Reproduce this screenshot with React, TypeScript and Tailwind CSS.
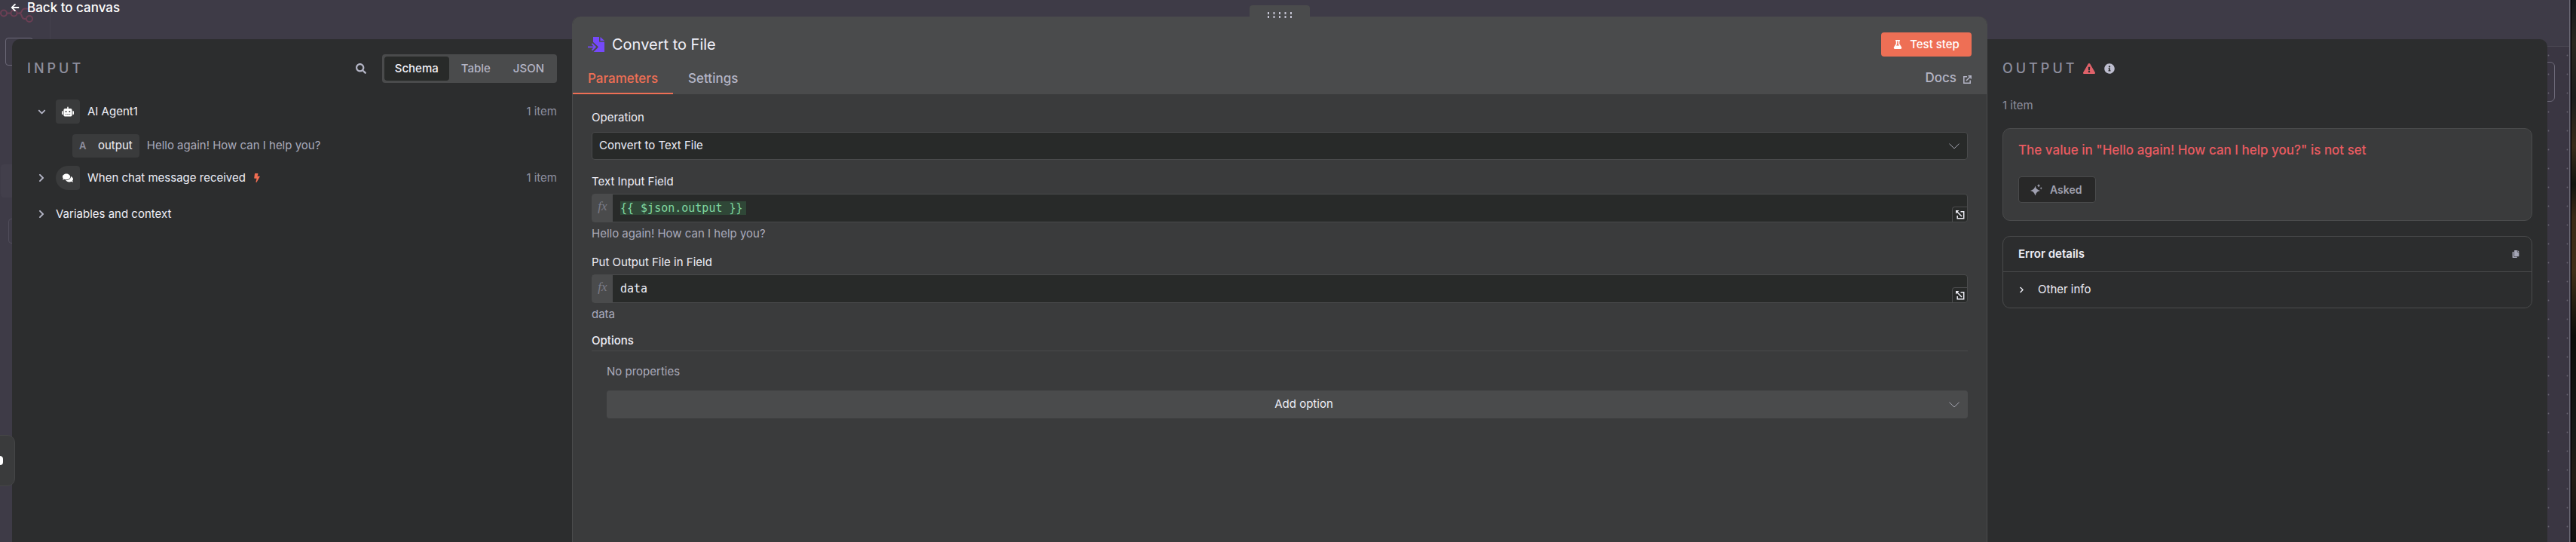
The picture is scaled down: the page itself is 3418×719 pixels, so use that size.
import type { ReactNode } from "react";
import {
  FaArrowLeft,
  FaBolt,
  FaChevronDown,
  FaChevronRight,
  FaComments,
  FaCopy,
  FaExclamationTriangle,
  FaFlask,
  FaInfoCircle,
  FaRobot,
  FaSearch,
} from "react-icons/fa";

function FileImportIcon() {
  return (
    <svg viewBox="0 0 22 20" className="h-5 w-[22px]" fill="#7549fb" aria-hidden="true">
      <path d="M7 0h8v6.500h7V20H7.500l6-6v-1.200L7 6.800z" />
      <path d="M16.500 0l5.500 5h-5.500z" />
      <path d="M0 12.400h7.600L4.800 9.600 6.200 8.300l5 5-5 5-1.400-1.300 2.800-2.800H0z" />
    </svg>
  );
}

function ExternalLinkIcon() {
  return (
    <svg viewBox="0 0 11 11" className="size-[11px]" fill="none" stroke="currentColor" strokeWidth="1.500" aria-hidden="true">
      <path d="M5 1.800H.8v8.400h8.400V6.500" />
      <path d="M4 7l6-6M6.500.8h3.700v3.700" />
    </svg>
  );
}

function ExpandIcon() {
  return (
    <svg viewBox="0 0 12 12" className="size-3" fill="none" stroke="currentColor" strokeWidth="1.500" aria-hidden="true">
      <path d="M6.500 1.800h4.200v9H2.200V7" />
      <path d="M1.500 1.500L8 8" />
      <path d="M0 0h4.500L0 4.500z" fill="currentColor" stroke="none" />
    </svg>
  );
}

function SparkleIcon() {
  return (
    <svg viewBox="0 0 16 16" className="size-4" fill="currentColor" aria-hidden="true">
      <path d="M6.500 2.500q1 5 6.500 6.500-5.500 1-6.500 6.500Q5.500 10 0 9q5.500-1.500 6.500-6.500z" />
      <path d="M11 0q.4 2 2 2.400-1.600.4-2 2.200-.4-1.800-2-2.200Q10.600 2 11 0zM14.200 4q.3 1.500 1.600 1.800-1.300.3-1.600 1.700-.3-1.400-1.600-1.700 1.300-.3 1.600-1.800z" />
    </svg>
  );
}

function ThinChevron() {
  return (
    <svg
      viewBox="0 0 14 8"
      className="pointer-events-none absolute right-[11px] top-1/2 h-2 w-[14px] -translate-y-1/2"
      fill="none"
      stroke="#a5a6b2"
      aria-hidden="true"
    >
      <path d="M.5.7L7 7l6.500-6.300" />
    </svg>
  );
}

function CanvasBackdrop() {
  return (
    <div className="absolute inset-0 overflow-hidden" aria-hidden="true">
      <div className="absolute inset-y-0 right-[8px] w-[46px] border-r border-[#6b6975]" />
      <div className="absolute bottom-0 right-[9px] top-[61px] w-[35px] border-t border-[#4a4752] bg-[#3a3642]">
        <svg className="h-full w-full">
          <defs>
            <pattern id="dots" x="6" y="-1" width="25" height="25" patternUnits="userSpaceOnUse">
              <circle cx="1.500" cy="12.500" r="0.900" fill="#65616e" />
            </pattern>
          </defs>
          <rect width="100%" height="100%" fill="url(#dots)" />
        </svg>
      </div>
      <div className="absolute right-[28px] top-[82px] h-[53px] w-12 rounded-md border border-[#6b6877]" />
      <div className="absolute inset-y-0 right-0 w-[7px] border-l border-black bg-[linear-gradient(180deg,#15181b_0%,#2c2820_8%,#1c1d1d_18%,#3a2d1c_27%,#12140f_34%,#3b2a18_40%,#41301a_50%,#0c0d0a_62%,#171a18_80%,#241d16_88%,#10110f_100%)]" />
      <div className="absolute left-[66px] top-0 h-[60px] w-px bg-[#45424e]" />
      <svg className="absolute left-0 top-2 h-6 w-[50px]" viewBox="0 0 50 24" fill="none" stroke="#6b3f54" strokeWidth="2">
        <circle cx="5" cy="9.500" r="4" />
        <circle cx="18.500" cy="9.500" r="4" />
        <circle cx="39" cy="17" r="4" />
        <circle cx="43" cy="4" r="4" />
        <path d="M9 9.500h5.500M22.500 9.500h3q2.500 0 3.500-3t4-3h6M25.500 9.500q2.500 0 3.500 4t4 3.500h2" />
      </svg>
      <div className="absolute left-[7px] top-[50px] h-[37px] w-[37px] rounded border border-[#6b6877]" />
      <div className="absolute left-[1px] top-[218px] h-11 w-12 rounded bg-[#423f4b]" />
      <div className="absolute left-[11px] top-[290px] h-[33px] w-12 rounded border border-[#504d5a]" />
    </div>
  );
}

function Disclosure({ open = false, label }: { open?: boolean; label: string }) {
  return (
    <button aria-label={label} aria-expanded={open} className="flex w-[10px] items-center justify-center text-[#b4b5c6]">
      {open ? <FaChevronDown className="size-[11px] shrink-0" /> : <FaChevronRight className="size-3 shrink-0" />}
    </button>
  );
}

function InputPanel() {
  return (
    <section className="mt-[52px] rounded-tl-[10px] bg-[#2c2d2e] pl-5 pr-5 pt-5">
      <header className="flex h-[38px] items-center">
        <h2 className="text-lg font-medium tracking-[4px] text-[#8e8f9e]">INPUT</h2>
        <button aria-label="Search" className="ml-auto mr-[21px] text-[#b4b5c6]">
          <FaSearch className="size-[14px]" />
        </button>
        <div role="tablist" className="flex h-[38px] rounded bg-[#4a4b4c] p-[3px] text-[15px] font-medium text-[#b4b5c6]">
          <button role="tab" aria-selected="true" className="rounded bg-[#282a29] px-[14px] text-[#f2f2fa]">Schema</button>
          <button role="tab" aria-selected="false" className="px-4">Table</button>
          <button role="tab" aria-selected="false" className="px-[14px]">JSON</button>
        </div>
      </header>
      <div className="mt-[22px] text-[15px] text-[#eeeef6]">
        <div className="flex h-8 items-center pl-[14px]">
          <Disclosure open label="Toggle AI Agent1" />
          <span className="ml-[14px] flex size-8 items-center justify-center rounded bg-[#3a3b3c] text-white">
            <FaRobot className="size-4" />
          </span>
          <span className="ml-[10px] pt-px">AI Agent1</span>
          <span className="ml-auto pt-px text-[#8e8f9e]">1 item</span>
        </div>
        <div className="mt-[14px] flex h-[31px] items-center pl-[60px]">
          <span className="flex h-[31px] items-center rounded bg-[#3a3b3c] px-[9px]">
            <span className="w-[25px] text-[13px] font-semibold text-[#8e8f9e]">A</span>
            <span>output</span>
          </span>
          <span className="ml-[10px] text-[#a9aabb]">Hello again! How can I help you?</span>
        </div>
        <div className="mt-[11px] flex h-8 items-center pl-[14px]">
          <Disclosure label="Toggle When chat message received" />
          <span className="ml-[14px] flex size-8 items-center justify-center rounded rounded-l-2xl bg-[#3a3b3c] text-white">
            <FaComments className="size-[14px]" />
          </span>
          <span className="ml-[10px]">When chat message received</span>
          <FaBolt className="ml-[9px] size-3 text-[#f06d52]" />
          <span className="ml-auto text-[#8e8f9e]">1 item</span>
        </div>
        <div className="mt-4 flex h-8 items-center pl-[14px]">
          <Disclosure label="Toggle Variables and context" />
          <span className="ml-[14px]">Variables and context</span>
        </div>
      </div>
    </section>
  );
}

function ExpressionField({ id, label, hint, children }: { id: string; label: string; hint: string; children: ReactNode }) {
  return (
    <div>
      <label htmlFor={id} className="block text-[15px] leading-5 text-[#eeeef6]">{label}</label>
      <div className="relative mt-1.5 flex h-[38px] rounded border border-[#4a4b4c] bg-[#282a29]">
        <span className="flex w-[27px] items-center justify-center bg-[#4a4b4c] pb-1 font-['Liberation_Serif',serif] text-[17px] italic text-[#7b7c88]">fx</span>
        <div className="flex flex-1 items-center pl-[10px] pr-7 font-['DejaVu_Sans_Mono',monospace] text-[15px]">{children}</div>
        <button type="button" aria-label={"Expand " + label} className="absolute bottom-0 right-0 flex h-5 w-5 items-center justify-center rounded-tl border-l border-t border-[#4a4b4c] text-[#eeeef6]">
          <ExpandIcon />
        </button>
      </div>
      <p className="mt-[5px] text-[15px] leading-5 text-[#a9aabb]">{hint}</p>
    </div>
  );
}

function NodePanel() {
  return (
    <main className="relative mt-[22px] rounded-t-[10px] border-x border-[#4a4b4c] bg-[#3a3b3c]">
      <button aria-label="Drag panel" className="absolute -top-[15px] left-1/2 flex h-[15px] w-20 -translate-x-1/2 items-end justify-center rounded-t bg-[#4a4b4c]">
        <svg viewBox="0 0 32 8" className="-mb-[2px] h-2 w-8" fill="#c3c3d2" aria-hidden="true">
          <path d="M0 0h2v3H0zM7.500 0h2v3h-2zM15 0h2v3h-2zM22.500 0h2v3h-2zM30 0h2v3h-2zM0 5h2v3H0zM7.500 5h2v3h-2zM15 5h2v3h-2zM22.500 5h2v3h-2zM30 5h2v3h-2z" />
        </svg>
      </button>
      <header className="rounded-t-[10px] bg-[#4a4b4c] pt-[21px]">
        <div className="flex h-8 items-center pl-5 pr-5">
          <FileImportIcon />
          <h1 className="ml-[10px] text-xl text-[#f2f2fa]">Convert to File</h1>
          <button className="ml-auto flex h-8 w-[120px] items-center justify-center gap-[10px] rounded bg-[#ee6f55] text-[15px] font-medium text-white">
            <FaFlask className="size-3" />
            Test step
          </button>
        </div>
        <nav className="mt-2 flex h-[42px] items-stretch text-[17px] font-medium text-[#b4b5c6]">
          <button className="border-b-2 border-[#ee6f55] px-5 pt-[3px] text-[#ee6f55]">Parameters</button>
          <button className="border-b-2 border-transparent px-5 pt-[3px]">Settings</button>
          <a href="#docs" className="ml-auto flex items-center gap-[9px] pr-5">
            Docs
            <span className="pt-[3px]"><ExternalLinkIcon /></span>
          </a>
        </nav>
      </header>
      <form className="px-[25px] pt-5">
        <label htmlFor="operation" className="block pt-px text-[15px] leading-5 text-[#eeeef6]">Operation</label>
        <div className="relative mt-[9px]">
          <select id="operation" className="block h-[37px] w-full appearance-none rounded border border-[#4a4b4c] bg-[#282a29] px-[9px] text-[15px] text-[#eeeef6]">
            <option>Convert to Text File</option>
          </select>
          <ThinChevron />
        </div>
        <div className="mt-[19px] flex flex-col gap-[18px]">
          <ExpressionField id="text-input" label="Text Input Field" hint="Hello again! How can I help you?">
            <input id="text-input" readOnly defaultValue="{{ $json.output }}" className="h-[18px] w-[167px] bg-[#2f4737] text-[#7fd6a0] outline-none" />
          </ExpressionField>
          <ExpressionField id="output-field" label="Put Output File in Field" hint="data">
            <input id="output-field" defaultValue="data" className="w-full bg-transparent text-[#eeeef6] outline-none" />
          </ExpressionField>
        </div>
        <h3 className="mt-[15px] border-b border-[#4a4b4c] pb-[3px] text-[15px] font-medium leading-5 text-[#eeeef6]">Options</h3>
        <div className="pl-5">
          <p className="mt-[17px] text-[15px] leading-5 text-[#a9aabb]">No properties</p>
          <div className="relative mt-[15px]">
            <select aria-label="Add option" className="block h-[37px] w-full appearance-none rounded bg-[#4a4b4c] pl-11 text-[15px] text-[#eeeef6] [text-align-last:center]">
              <option>Add option</option>
            </select>
            <ThinChevron />
          </div>
        </div>
      </form>
    </main>
  );
}

function OutputPanel() {
  return (
    <section className="mt-[52px] rounded-tr-[10px] bg-[#2c2d2e] px-5 pt-5">
      <header className="flex h-[38px] items-center">
        <h2 className="text-lg font-medium tracking-[4px] text-[#8e8f9e]">OUTPUT</h2>
        <FaExclamationTriangle className="ml-[7px] size-4 text-[#e0626a]" />
        <FaInfoCircle className="ml-3 size-[14px] text-[#bdbdcf]" />
      </header>
      <p className="mt-5 text-[15px] leading-5 text-[#8e8f9e]">1 item</p>
      <div className="mt-5 rounded-[10px] border border-[#4a4b4c] bg-[#3a3b3c] px-5 pb-[23px] pt-4">
        <p className="text-[17px] font-medium leading-6 text-[#ea5b61]">The value in "Hello again! How can I help you?" is not set</p>
        <button className="mt-[23px] flex h-[35px] items-center gap-[10px] rounded border border-[#4a4b4c] bg-[#282828] pl-[15px] pr-[18px] text-sm font-semibold text-[#9fa0b0]">
          <SparkleIcon />
          Asked
        </button>
      </div>
      <div className="mt-5 rounded-[10px] border border-[#4a4b4c] text-[15px] text-[#eeeef6]">
        <div className="flex h-[47px] items-center justify-between border-b border-[#4a4b4c] pl-5 pr-4">
          <h3 className="font-semibold">Error details</h3>
          <button aria-label="Copy error details" className="text-[#a5a6b6]">
            <FaCopy className="size-[10px]" />
          </button>
        </div>
        <button className="flex h-[47px] w-full items-center gap-[17px] pl-5">
          <FaChevronRight className="size-[9px]" />
          Other info
        </button>
      </div>
    </section>
  );
}

export default function App() {
  return (
    <div className="relative flex min-h-screen flex-col overflow-hidden bg-[#3e3b47] font-[Inter,sans-serif]">
      <CanvasBackdrop />
      <a href="#canvas" className="absolute left-[14px] top-0 z-10 flex items-center gap-[10px] text-[17px] font-medium leading-5 text-white">
        <FaArrowLeft className="size-3" />
        Back to canvas
      </a>
      <div className="relative grid flex-1 grid-cols-[743fr_1878fr_743fr] pl-4 pr-[38px]">
        <InputPanel />
        <NodePanel />
        <OutputPanel />
      </div>
      <button aria-label="Open menu" className="absolute -left-5 bottom-[74px] flex h-[68px] w-10 items-center rounded-[10px] border border-[#454647] bg-[#3a3b3c]">
        <span className="h-3 w-[23px] rounded-sm bg-white" />
      </button>
    </div>
  );
}
